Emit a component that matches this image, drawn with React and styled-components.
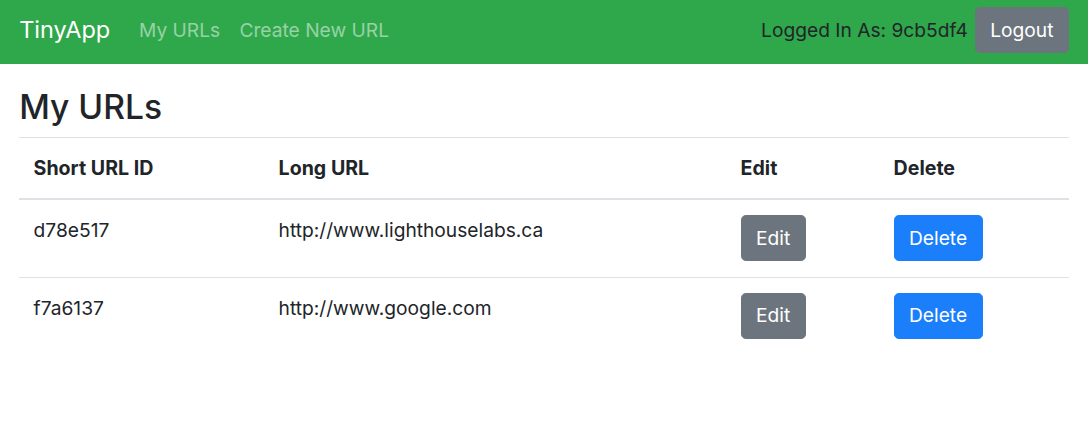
import React from "react";
import styled, { createGlobalStyle } from "styled-components";

const Global = createGlobalStyle`
  html, body { margin: 0; padding: 0; background: #fff; }
  body {
    font-family: Inter, "Noto Sans", "Liberation Sans", sans-serif;
    font-size: 19.2px;
    line-height: 1.5;
    color: #212529;
  }
  * { box-sizing: border-box; }
`;

const Navbar = styled.nav`
  height: 64px;
  background: #2fa74b;
  display: flex;
  align-items: center;
  padding: 0 19.2px 4px;
`;

const Brand = styled.a`
  color: #fff;
  font-size: 23.5px;
  line-height: 1.5;
  margin-right: 19.2px;
  text-decoration: none;
`;

const NavLinks = styled.div`
  display: flex;
  flex: 1;
`;

const NavLink = styled.a`
  color: rgba(255, 255, 255, 0.5);
  padding: 0 9.6px;
  text-decoration: none;
`;

const UserArea = styled.div`
  display: flex;
  align-items: center;
  gap: 7px;
`;

const UserText = styled.span`
  color: #212529;
`;

const Button = styled.button`
  font-family: inherit;
  font-size: 19.2px;
  line-height: 28.8px;
  height: 46px;
  padding: 0 14.4px;
  border: 1.2px solid ${(p) => (p.$variant === "primary" ? "#1b7ffb" : "#6c757d")};
  background: ${(p) => (p.$variant === "primary" ? "#1b7ffb" : "#6c757d")};
  color: #fff;
  border-radius: 4.8px;
  cursor: pointer;
`;

const Container = styled.main`
  padding: 23px 19.2px 0;
`;

const Title = styled.h3`
  font-size: 33.6px;
  font-weight: 500;
  line-height: 1.2;
  margin: 0 0 9.6px;
`;

const Table = styled.table`
  width: 100%;
  border-collapse: collapse;
`;

const Th = styled.th`
  text-align: left;
  font-weight: 700;
  font-size: 19.6px;
  line-height: 28.8px;
  padding: 16.4px 14.4px 14.8px;
  border-top: 1px solid #dee2e6;
  border-bottom: 2px solid #dee2e6;
  vertical-align: bottom;
  width: ${(p) => p.$w}px;
`;

const Td = styled.td`
  padding: ${(p) => (p.$text ? "16.6px" : "15.2px")} 14.4px 15.5px;
  border-top: 1px solid #dee2e6;
  vertical-align: top;
  line-height: 28.8px;
`;

const Row = styled.tr``;

const urls = [
  { id: "d78e517", long: "http://www.lighthouselabs.ca" },
  { id: "f7a6137", long: "http://www.google.com" },
];

export default function App() {
  return (
    <>
      <Global />
      <Navbar>
        <Brand href="#">TinyApp</Brand>
        <NavLinks>
          <NavLink href="#">My URLs</NavLink>
          <NavLink href="#">Create New URL</NavLink>
        </NavLinks>
        <UserArea>
          <UserText>Logged In As: 9cb5df4</UserText>
          <Button>Logout</Button>
        </UserArea>
      </Navbar>
      <Container>
        <Title>My URLs</Title>
        <Table>
          <thead>
            <Row>
              <Th $w={245}>Short URL ID</Th>
              <Th $w={462}>Long URL</Th>
              <Th $w={153}>Edit</Th>
              <Th>Delete</Th>
            </Row>
          </thead>
          <tbody>
            {urls.map((u) => (
              <Row key={u.id}>
                <Td $text>{u.id}</Td>
                <Td $text>{u.long}</Td>
                <Td>
                  <Button>Edit</Button>
                </Td>
                <Td>
                  <Button $variant="primary">Delete</Button>
                </Td>
              </Row>
            ))}
          </tbody>
        </Table>
      </Container>
    </>
  );
}
